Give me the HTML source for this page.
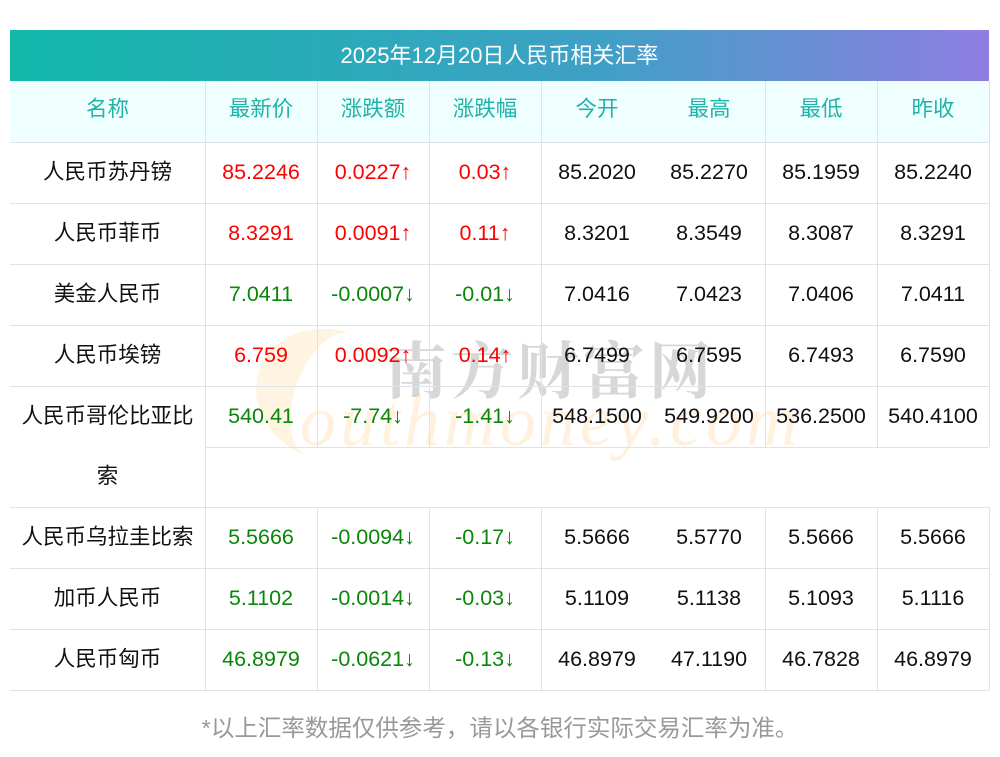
<!DOCTYPE html>
<html><head><meta charset="utf-8"><style>
*{margin:0;padding:0;box-sizing:border-box}
body{width:1000px;height:757px;background:#fff;position:relative;overflow:hidden;font-family:"Liberation Sans","Noto Sans CJK SC",sans-serif;font-size:21.5px;color:#111}
.t{position:absolute;left:10px;top:30px;width:979px;height:51px;background:linear-gradient(90deg,#12b8aa,#3fa0c6 60%,#8f7ee2);color:#fff;text-align:center;line-height:51px;font-size:22px}
.hb{position:absolute;left:10px;top:81px;width:979px;height:61px;background:#efffff}
.h{position:absolute;left:0;top:0;width:1px;background:#dfe1ec}
.l{position:absolute;height:1px;background:#dfe1ec}
.c{position:absolute;text-align:center;line-height:61px;height:61px;white-space:nowrap}
.hd{color:#20b4a8}
.r{color:#f00}.g{color:#0a870a}
.wm1{position:absolute;left:385px;top:322px;font-size:62px;color:rgba(140,140,140,.35);letter-spacing:4px;font-family:"Noto Serif CJK SC",serif;font-weight:bold}
.wm2{position:absolute;left:300px;top:380px;font-size:72px;font-style:italic;color:rgba(255,200,120,.25);font-family:"Liberation Serif",serif;letter-spacing:4px}
.wm3{position:absolute;left:255px;top:330px;width:150px;height:130px;border-radius:50%;border-left:40px solid rgba(255,200,120,.22);transform:rotate(20deg)}
.f{position:absolute;left:0;width:1000px;top:709px;text-align:center;color:#999;font-size:23.5px}
</style></head><body>
<div class="t">2025年12月20日人民币相关汇率</div>
<div class="hb"></div>
<div class="wm3"></div>
<div class="wm2">outhmoney.com</div>
<div class="wm1">南方财富网</div>
<div id="g"></div>
<div class="f">*以上汇率数据仅供参考，请以各银行实际交易汇率为准。</div>
<script>
var g=document.getElementById('g'),h='';
var xs=[10,205,317,429,541,653,765,877,989];
function cell(x0,x1,y,txt,cls){h+='<div class="c '+(cls||'')+'" style="left:'+x0+'px;width:'+(x1-x0)+'px;top:'+y+'px">'+txt+'</div>';}
var hd=['名称','最新价','涨跌额','涨跌幅','今开','最高','最低','昨收'];
for(var i=0;i<8;i++)cell(xs[i],xs[i+1],79,hd[i],'hd');
var rows=[
['人民币苏丹镑','85.2246','0.0227↑','0.03↑','85.2020','85.2270','85.1959','85.2240','r'],
['人民币菲币','8.3291','0.0091↑','0.11↑','8.3201','8.3549','8.3087','8.3291','r'],
['美金人民币','7.0411','-0.0007↓','-0.01↓','7.0416','7.0423','7.0406','7.0411','g'],
['人民币埃镑','6.759','0.0092↑','0.14↑','6.7499','6.7595','6.7493','6.7590','r'],
['人民币哥伦比亚比','540.41','-7.74↓','-1.41↓','548.1500','549.9200','536.2500','540.4100','g'],
null,
['人民币乌拉圭比索','5.5666','-0.0094↓','-0.17↓','5.5666','5.5770','5.5666','5.5666','g'],
['加币人民币','5.1102','-0.0014↓','-0.03↓','5.1109','5.1138','5.1093','5.1116','g'],
['人民币匈币','46.8979','-0.0621↓','-0.13↓','46.8979','47.1190','46.7828','46.8979','g']];
var ys=[142,203,264,325,386,447,507,568,629,690];
for(var r=0;r<rows.length;r++){
 var y=ys[r];
 if(!rows[r]){cell(10,205,y-1,'索');continue;}
 var R=rows[r];
 for(var i=0;i<8;i++)cell(xs[i],xs[i+1],y,R[i],(i>=1&&i<=3)?R[8]:'');
}
for(var r=0;r<ys.length;r++){
 if(r==5){h+='<div class="l" style="left:205px;width:784px;top:447px"></div>';continue;}
 h+='<div class="l" style="left:10px;width:979px;top:'+ys[r]+'px"></div>';}
var vx=[205,317,429,541,765,877,989];
for(var k=0;k<vx.length;k++){
 if(vx[k]==205){h+='<div class="h" style="left:205px;top:81px;height:609px"></div>';}
 else{h+='<div class="h" style="left:'+vx[k]+'px;top:81px;height:366px"></div>';
      h+='<div class="h" style="left:'+vx[k]+'px;top:507px;height:183px"></div>';}
}
g.innerHTML=h;
</script>
</body></html>
